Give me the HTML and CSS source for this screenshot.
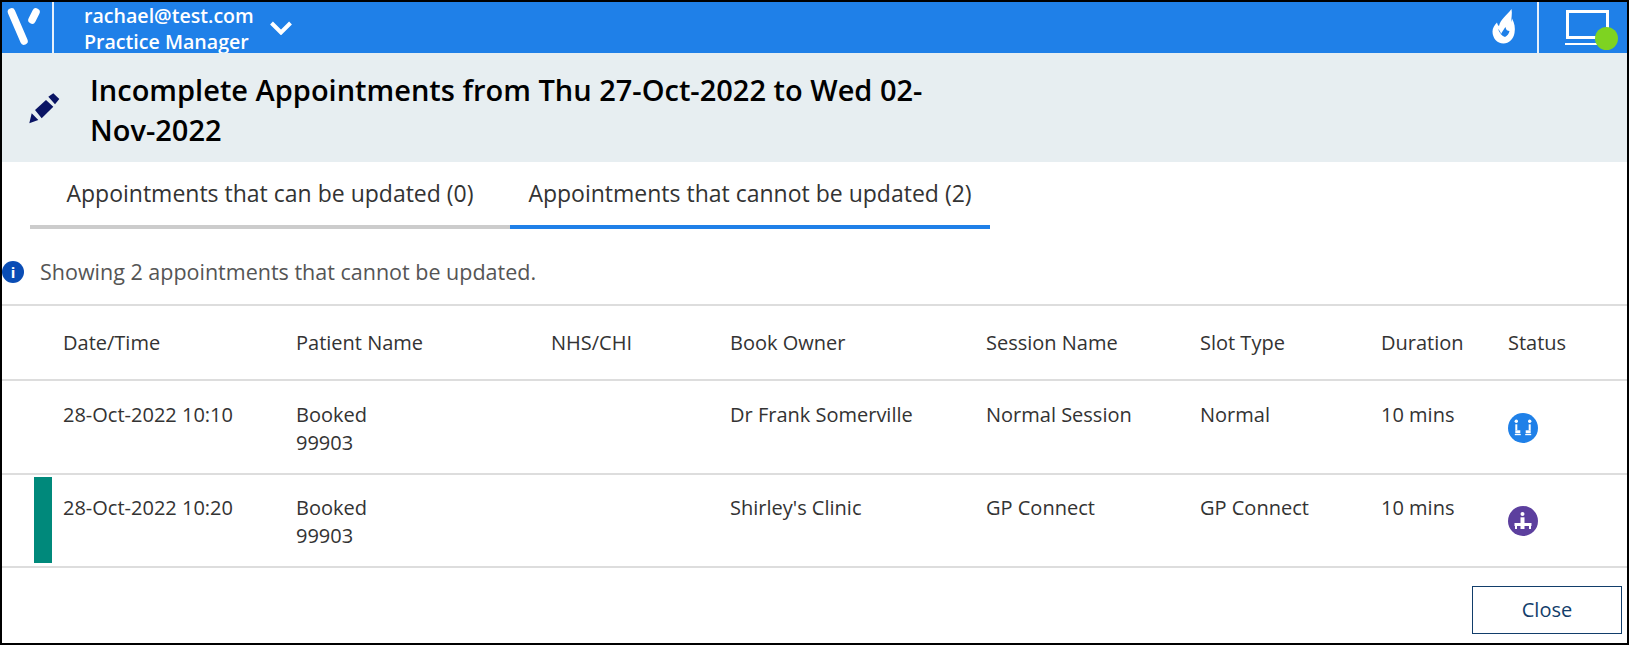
FILE: index.html
```html
<!DOCTYPE html>
<html lang="en">
<head>
  <meta charset="UTF-8">
  <meta name="viewport" content="width=device-width, initial-scale=1.0">
  <title>Incomplete Appointments</title>
  <link rel="stylesheet" href="styles.css">
</head>
<body>
  <div class="frame">
    <header class="topbar">
      <a class="logo">
        <svg width="50" height="51" viewBox="0 0 50 51">
          <path class="logo-stroke" d="M9.500 10 L22 39"/>
          <path class="logo-stroke" d="M34 10 L30 18"/>
        </svg>
      </a>
      <div class="user">
        <div>rachael@test.com</div>
        <div>Practice Manager</div>
      </div>
      <svg class="chevron" width="22" height="14" viewBox="0 0 22 14">
        <path d="M1.500 2 L11 11.500 L20.500 2" fill="none" stroke="#fff" stroke-width="4"/>
      </svg>
      <div class="spacer"></div>
      <svg class="flame" width="34" height="45" viewBox="0 0 34 45">
        <path fill="#fff" d="M24.500 4 C25.500 9 24 13 24.500 17 C25 15.500 25 14.500 25 13.500 C27.500 18 28.500 23 27.500 28 C26.500 34 22 38.500 16.500 38.500 C10 38.500 5.500 33 5.500 26.500 C5.500 23 7.500 20 10 17.500 C10.500 19.500 11 20.500 12 21 C13.500 14 20 10 24.500 4 Z"/>
        <path fill="#1f80e8" d="M11 24 C12.500 25 13.500 27 14 29 C15.500 26 17 24 18.500 22 C19 25 20.500 26 22.500 26 C22 29 20 31 18 32 C15 31 12.500 28 11 24 Z"/>
      </svg>
      <div class="bar-divider"></div>
      <div class="device">
        <div class="screen"></div>
        <div class="base"></div>
        <div class="online"></div>
      </div>
    </header>

    <section class="titlebar">
      <svg class="pencil" width="45" height="45" viewBox="0 0 45 45">
        <path fill="#0a1464" d="M28.300 11.700 L33.300 8.300 L39.300 14 L35 19.300 Z M15 25 L26 15 L33.300 21.700 L21.700 33.300 Z M11.700 28.300 L18.300 35 L9.300 38.300 Z"/>
      </svg>
      <h1>Incomplete Appointments from Thu 27-Oct-2022 to Wed 02-Nov-2022</h1>
    </section>

    <nav class="tabs">
      <a class="tab">Appointments that can be updated (0)</a>
      <a class="tab active">Appointments that cannot be updated (2)</a>
    </nav>

    <div class="info">
      <span class="info-icon">i</span>
      <span>Showing 2 appointments that cannot be updated.</span>
    </div>

    <div class="grid header-row">
      <div></div>
      <div>Date/Time</div>
      <div>Patient Name</div>
      <div>NHS/CHI</div>
      <div>Book Owner</div>
      <div>Session Name</div>
      <div>Slot Type</div>
      <div>Duration</div>
      <div>Status</div>
    </div>

    <div class="grid row">
      <div></div>
      <div>28-Oct-2022 10:10</div>
      <div>Booked<br>99903</div>
      <div></div>
      <div>Dr Frank Somerville</div>
      <div>Normal Session</div>
      <div>Normal</div>
      <div>10 mins</div>
      <div>
        <span class="status blue">
          <svg width="30" height="30" viewBox="0 0 30 30">
            <g fill="#fff">
              <circle cx="8.300" cy="8.300" r="1.700"/><rect x="7.300" y="11.300" width="2" height="6"/><rect x="7.300" y="17.300" width="5" height="3"/><rect x="6.800" y="21" width="6" height="1.200"/>
              <circle cx="21.700" cy="8.300" r="1.700"/><rect x="20.700" y="11.300" width="2" height="6"/><rect x="17.700" y="17.300" width="5" height="3"/><rect x="17.200" y="21" width="6" height="1.200"/>
            </g>
          </svg>
        </span>
      </div>
    </div>

    <div class="grid row">
      <div class="marker-cell"><div class="marker"></div></div>
      <div>28-Oct-2022 10:20</div>
      <div>Booked<br>99903</div>
      <div></div>
      <div>Shirley's Clinic</div>
      <div>GP Connect</div>
      <div>GP Connect</div>
      <div>10 mins</div>
      <div>
        <span class="status purple">
          <svg width="30" height="30" viewBox="0 0 30 30">
            <g fill="#fff">
              <circle cx="14.500" cy="8" r="2"/><rect x="12.500" y="11.300" width="4" height="7"/><rect x="6.500" y="17" width="17" height="3"/><rect x="7" y="20" width="2" height="3"/><rect x="21" y="20" width="2" height="3"/><rect x="12.500" y="20" width="4" height="3"/>
            </g>
          </svg>
        </span>
      </div>
    </div>

    <footer class="footer">
      <button class="close-btn">Close</button>
    </footer>
  </div>
</body>
</html>
```

FILE: styles.css
```css
* {
  box-sizing: border-box;
}
html, body {
  margin: 0;
  height: 100%;
}
body {
  font-family: 'Open Sans', 'Noto Sans', sans-serif;
  font-size: 20px;
  color: #333;
  background: white;
}
.frame {
  height: 645px;
  border: 2px solid black;
  display: flex;
  flex-direction: column;
  overflow: hidden;
}

.topbar {
  display: flex;
  align-items: center;
  height: 51px;
  flex: none;
  background-color: #1f80e8;
  color: white;
  font-size: 19.600px;
  font-weight: 600;
}
.logo {
  display: flex;
  width: 52px;
  height: 100%;
  border-right: 2px solid #e6f0fb;
}
.logo-stroke {
  fill: none;
  stroke: white;
  stroke-width: 7.500;
  stroke-linecap: round;
}
.user {
  margin: 2px 0 0 30px;
  line-height: 26px;
  width: 186px;
  white-space: nowrap;
}
.chevron {
  margin: 1px 0 0 0;
}
.spacer {
  flex: 1;
}
.flame {
  margin-right: 16px;
}
.bar-divider {
  width: 2px;
  height: 100%;
  background-color: #e6f0fb;
}
.device {
  position: relative;
  width: 88px;
  height: 100%;
}
.screen {
  position: absolute;
  left: 27px;
  top: 8px;
  width: 43px;
  height: 29px;
  border: 3px solid white;
}
.base {
  position: absolute;
  left: 26px;
  top: 41px;
  width: 45px;
  height: 2px;
  background: white;
}
.online {
  position: absolute;
  left: 56px;
  top: 25px;
  width: 23px;
  height: 23px;
  border-radius: 50%;
  background-color: #7ed321;
}

.titlebar {
  display: flex;
  align-items: center;
  height: 109px;
  flex: none;
  background-color: #e7eef1;
  padding-left: 18px;
}
.titlebar h1 {
  margin: 5px 0 0 25px;
  width: 850px;
  font-size: 29px;
  font-weight: 600;
  line-height: 40px;
  color: #000;
}

.tabs {
  display: flex;
  height: 67px;
  flex: none;
  padding-left: 28px;
}
.tab {
  display: flex;
  align-items: center;
  justify-content: center;
  width: 480px;
  padding-bottom: 2px;
  font-size: 23px;
  border-bottom: 4px solid #ccc;
  color: #333;
}
.tab.active {
  border-bottom-color: #1f80e8;
}

.info {
  display: flex;
  align-items: center;
  height: 77px;
  flex: none;
  padding-top: 10px;
  font-size: 21.500px;
  color: #555;
  border-bottom: 2px solid #ddd;
}
.info-icon {
  width: 22px;
  height: 22px;
  margin-right: 16px;
  border-radius: 50%;
  background-color: #0a4db5;
  color: white;
  font-size: 15px;
  font-weight: 700;
  line-height: 22px;
  text-align: center;
}

.grid {
  display: grid;
  grid-template-columns: 61px 233px 255px 179px 256px 214px 181px 127px 1fr;
  flex: none;
  border-bottom: 2px solid #ddd;
}
.header-row {
  height: 75px;
  align-items: center;
}
.row {
  height: 93.500px;
  padding-top: 19.500px;
  line-height: 28px;
}
.marker-cell {
  position: relative;
}
.marker {
  position: absolute;
  left: 32px;
  top: -17px;
  width: 18px;
  height: 86px;
  background-color: #00897b;
}
.status {
  display: block;
  width: 30px;
  height: 30px;
  margin-top: 12px;
  border-radius: 50%;
}
.status.blue {
  background-color: #1f80e8;
}
.status.purple {
  background-color: #5c3f9e;
}

.footer {
  flex: 1;
  display: flex;
  justify-content: flex-end;
  align-items: flex-start;
  padding: 18px 5px 0 0;
}
.close-btn {
  width: 150px;
  height: 48px;
  padding-bottom: 3px;
  border: 1px solid #123e6b;
  background: white;
  color: #123e6b;
  font-family: inherit;
  font-size: 20px;
}
```
